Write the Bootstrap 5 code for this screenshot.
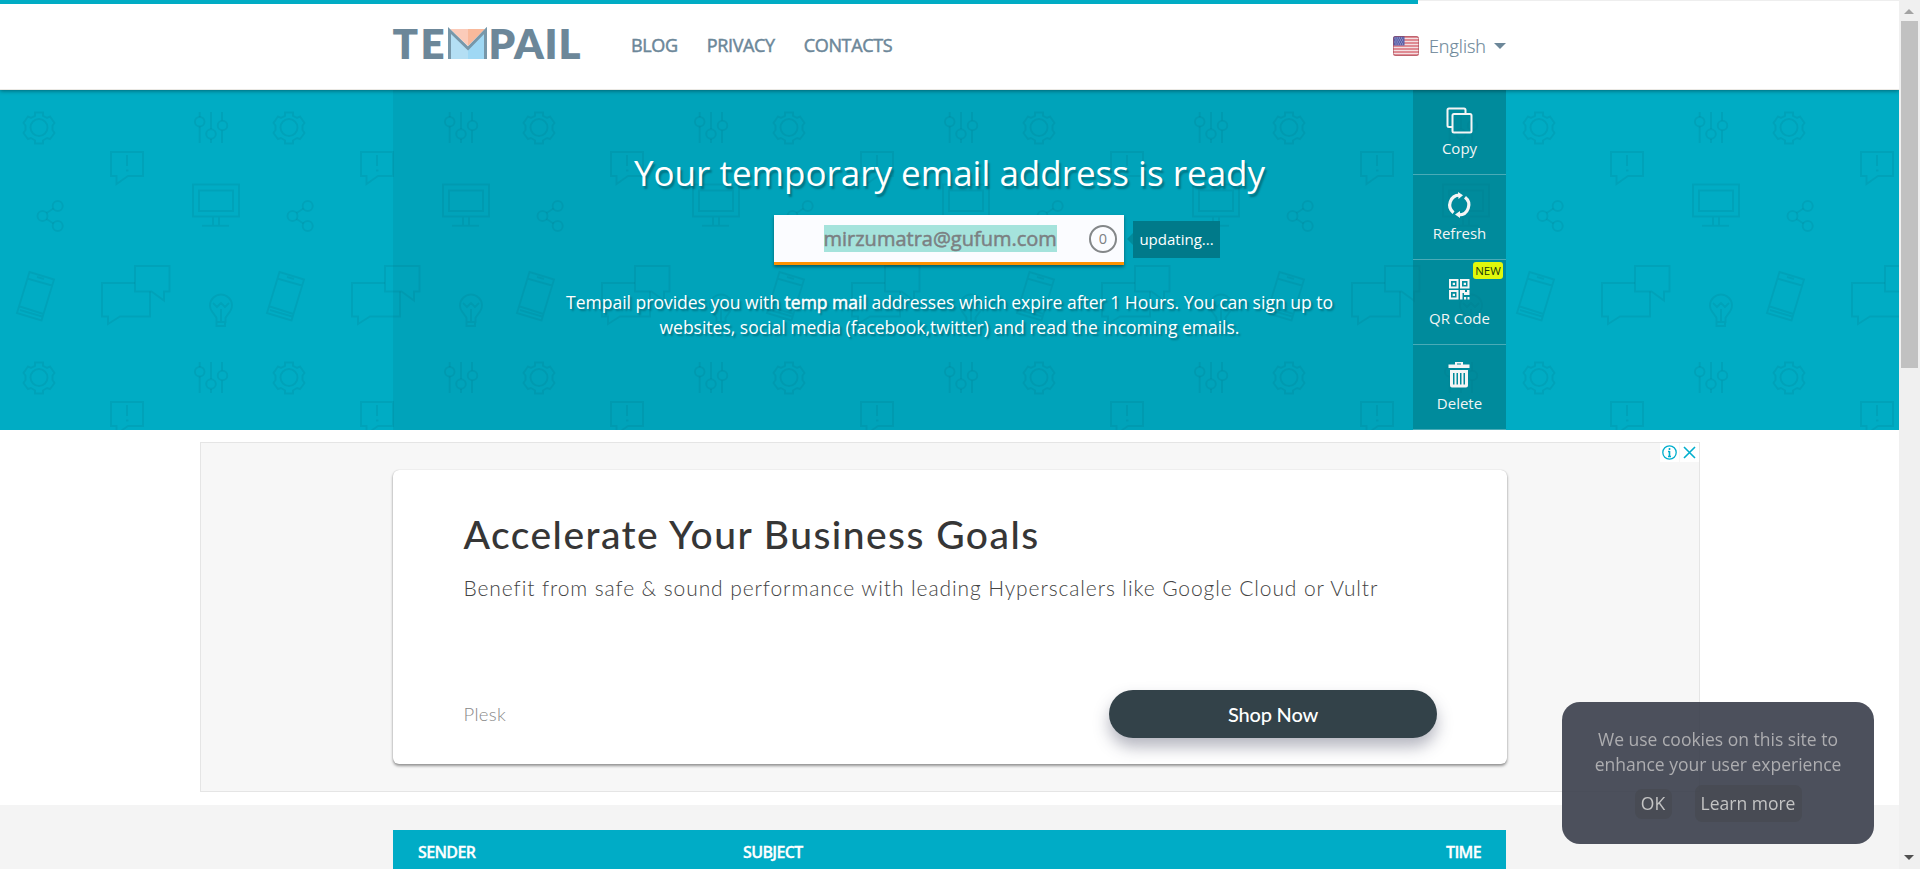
<!DOCTYPE html>
<html lang="en">
<head>
<meta charset="utf-8">
<meta name="viewport" content="width=device-width, initial-scale=1">
<title>Tempail - Temporary Email</title>
<link href="https://cdn.jsdelivr.net/npm/bootstrap@5.3.0/dist/css/bootstrap.min.css" rel="stylesheet">
<style>
  :root { --teal: #00acc4; --slate: #6c8799; }
  body { font-family: "Open Sans", "Noto Sans", sans-serif; height: 869px; background: #fff; }
  .wrap { width: 1113px; margin-left: 393px; }
  .viewport-area { width: 1899px; height: 869px; }
  .semi { -webkit-text-stroke: .5px currentColor; }

  .load-track { height: 4px; border-top: 1px solid #eee; }
  .load-bar { width: 1418px; height: 4px; margin-top: -1px; background: var(--teal); }
  .site-head { height: 90px; background: #fff; border-bottom: 1px solid #ebe9e4; box-shadow: 0 1px 4px rgba(0,0,0,.4); z-index: 3; }
  .head-row { height: 85px; }
  .logo { width: 188px; height: 56px; margin-top: -5px; overflow: visible; }
  .logo text { font: 800 42px Lato, sans-serif; fill: var(--slate); }
  .main-nav { gap: 29px; margin-left: 50px; margin-top: -3px; }
  .main-nav a, .lang { color: var(--slate); font-size: 18px; letter-spacing: -.35px; line-height: 26px; text-decoration: none; }
  .lang { margin-top: -2px; }
  .lang .lbl { font-weight: 300; letter-spacing: 0; -webkit-text-stroke: .2px currentColor; margin-left: 2px; }
  .lang .tri { width: 0; height: 0; border: 6px solid transparent; border-top-color: var(--slate); border-bottom: 0; margin-left: 8px; }

  .hero { height: 340px; background: var(--teal); }
  .hero-pattern { inset: 0; width: 100%; height: 100%; }
  .hero-shade { background: rgba(0,60,80,.08); height: 340px; }
  .hero-main { width: 1113px; padding-top: 61px; color: #fff; }
  .hero-main h1 { font-size: 35px; line-height: 44px; margin: 0; text-shadow: 2px 3px 2px rgba(0,0,0,.3); }
  .mailbox { width: 350px; height: 50px; margin: 20px 0 0 381px; background: #fbfcff; border-bottom: 3px solid #ff9200; box-shadow: 0 2px 3px rgba(0,0,0,.4); color: #7b8082; }
  .mailbox .addr { font-size: 20px; line-height: 27px; margin: 0 32px 0 49.5px; background: #a5e3dc; }
  .count { width: 28px; height: 28px; border: 2px solid #848789; border-radius: 50%; font-size: 14.5px; }
  .tip { left: 359px; top: 6px; width: 87px; height: 37px; background: #007a8a; color: #fff; font-size: 15px; }
  .tip::before { content: ""; position: absolute; left: -6px; top: 12px; border: 6px solid transparent; border-right-color: #008b9c; border-left: 0; }
  .about { font-size: 17.5px; line-height: 25px; margin: 25px 0 0; text-shadow: 2px 2px 2px rgba(0,0,0,.3); }

  .side-menu { width: 93px; right: 0; top: 0; background: #008b9c; }
  .side-menu a { height: 85px; border-bottom: 1px solid #4aabb7; color: #f2f5f5; text-decoration: none; font-size: 15px; line-height: 20px; padding-top: 16px; }
  .side-menu a svg { width: 28px; height: 28px; margin-left: -1px; }
  .side-menu .cap { margin-top: 4px; }
  .new-tag { right: 3px; top: 2px; width: 30px; height: 17px; border-radius: 3px; background: #e1f80c; color: #203a08; font-size: 11.5px; line-height: 17px; }
  .through { opacity: .6; pointer-events: none; }

  .ad-frame { width: 1500px; height: 350px; margin: 12px 0 0 200px; background: #f7f7f7; border: 1px solid #e5e5e5; padding: 27px 192px 0; font-family: Lato, sans-serif; }
  .ad-card { height: 294px; border: 0; border-radius: 6px; padding: 42px 70px 0 70.500px; box-shadow: 0 2px 3px rgba(0,0,0,.4), 0 0 1px rgba(0,0,0,.25); }
  .ad-card h2 { font-size: 39px; line-height: 44px; letter-spacing: 1.450px; font-weight: 500; color: #363636; margin: 0; white-space: nowrap; }
  .ad-card p { font-size: 21px; line-height: 28px; letter-spacing: .9px; font-weight: 300; color: #444; margin: 18px 0 0; white-space: nowrap; }
  .ad-foot { margin-top: 88px; }
  .ad-brand { font-size: 18.5px; font-weight: 300; letter-spacing: .3px; color: #888; padding-top: 1px; }
  .shop-btn, .shop-btn:hover { width: 328px; height: 48px; border-radius: 24px; background: #334249; color: #fff; font-size: 20px; font-weight: 500; letter-spacing: -.2px; box-shadow: 0 9px 16px rgba(60,64,90,.38); }
  .ad-tools { right: 0; top: 0; gap: 1px; }
  .ad-tools svg { width: 19px; height: 19px; background: #fff; }

  .inbox { height: 64px; margin-top: 13px; background: #f4f4f4; padding-top: 25px; }
  .inbox-head { height: 39px; background: #00acc6; color: #fff; font-size: 16px; font-weight: 600; letter-spacing: -.65px; line-height: 20px; padding: 12px 25px 0; -webkit-text-stroke: .3px currentColor; }
  .c-sender { width: 325px; }

  .cookie-box { left: 1562px; top: 702px; width: 312px; height: 142px; border-radius: 18px; background: rgba(61,65,78,.92); color: #adadb0; font-size: 17.5px; line-height: 25px; padding: 25px 20px 0; z-index: 5; }
  .cookie-box a { color: #c4c4c4; background: rgba(60,60,60,.25); border-radius: 7px; text-decoration: none; }
  .ck-ok { width: 37px; height: 30px; }
  .ck-more { width: 107px; height: 37px; }
  .cookie-actions { gap: 23px; margin-top: 8px; }

  .vscroll { width: 21px; height: 869px; background: #f0f0f0; padding: 9px 1px 9px 0; }
  .vscroll .thumb { width: 17px; height: 347px; background: #c1c1c1; margin-top: 7px; }
</style>
</head>
<body class="d-flex overflow-hidden">
<div class="viewport-area overflow-hidden flex-shrink-0">

  <header class="site-head position-relative">
    <div class="load-track"><div class="load-bar"></div></div>
    <div class="wrap head-row d-flex align-items-center">
      <svg class="logo" viewBox="0 -12 188 56" role="img" aria-label="Tempail">
        <text x="-.5" y="31" textLength="52">TE</text>
        <path d="M57 2 75 18V31H57z" fill="#b4dff4"/><path d="M92 2 75 18V31h17z" fill="#9fd8f4"/>
        <path d="M57 1H75V18z" fill="#fbcbb9"/><path d="M75 1H92L75 18z" fill="#f9b99b"/>
        <path d="M56.500 31V2.500L75 20.500 92.500 2.500V31" fill="none" stroke="#7797a9" stroke-width="3"/>
        <text x="95.500" y="31" textLength="92">PAIL</text>
      </svg>
      <nav class="main-nav nav d-flex semi">
        <a href="#">BLOG</a><a href="#">PRIVACY</a><a href="#">CONTACTS</a>
      </nav>
      <a class="lang d-flex align-items-center ms-auto" href="#">
        <svg width="26" height="20" viewBox="0 0 26 20" class="me-2 flex-shrink-0">
          <clipPath id="fl"><rect width="26" height="20" rx="2.500"/></clipPath>
          <g clip-path="url(#fl)">
            <path d="M0 0h26v20H0z" fill="#f3dfe2"/>
            <path d="M0 1h26M0 4h26M0 7h26M0 10h26M0 13h26M0 16h26M0 19h26" stroke="#d9707a" stroke-width="1.700"/>
            <path d="M0 0h11.500v9.500H0z" fill="#5a5fa8"/>
            <path d="M1.500 2h9M2.500 4h8M1.500 6h9M2.500 8h8" stroke="#b9bde0" stroke-width="1" stroke-dasharray="1 1.200"/>
            <rect x=".5" y=".5" width="25" height="19" rx="2" fill="none" stroke="#a24552" stroke-opacity=".55"/>
          </g>
        </svg>
        <span class="lbl">English</span><span class="tri"></span>
      </a>
    </div>
  </header>

  <section class="hero position-relative">
    <svg class="hero-pattern position-absolute" aria-hidden="true">
      <defs>
        <pattern id="tile" width="250" height="250" patternUnits="userSpaceOnUse">
          <g fill="none" stroke="#005a6e" stroke-opacity=".12" stroke-width="2">
            <circle cx="39" cy="37.500" r="8.500"/>
            <path d="M35 22.500h8v3.500l4 2 3-1.500 4.500 6.500-2 2.500v4.500l2 3-4.500 6-3-1-4 2.500v3h-8v-3l-4-2.500-3 1-4.500-6 2-3v-4.500l-2-2.500 4.500-6.500 3 1.500 4-2z"/>
            <path d="M199.700 22v5M199.700 36.500V53M211 22v17M211 49v4M222 22v8.500M222 40.500V53"/>
            <circle cx="199.700" cy="31.700" r="4.800"/><circle cx="211" cy="44" r="4.800"/><circle cx="222.500" cy="35.500" r="4.800"/>
            <path d="M111 62h32v24H128l-11.500 8V86H111zM127 65v11M126 80.500h2.500"/>
            <path d="M193 94.500h46v32h-46zM199 100.500h34v20.500h-34zM213 127v8M219 127v8M202 135.700h27"/>
            <circle cx="42.500" cy="126" r="5"/><circle cx="57.700" cy="116" r="5"/><circle cx="57.700" cy="136" r="5"/>
            <path d="m46.500 123 7-4.500M46.500 129l7 4.500"/>
            <path d="m29.500 182 24.500 7.500L41.500 230.500 17 223zM27 188.500l25 7M20 216.500l23.500 7.500M37 187l7 2M20 220l22 6.500"/>
            <path d="M150 201.500v25h-30l-12 7.500v-7.500h-6V193h33"/>
            <path d="M135 176h34.500v25.500H164v9l-12.500-9H135z"/>
            <path d="M216.500 232v-4c-2-4-6.500-7-6.500-12.500a11 11 0 0 1 22 0c0 5.500-4.500 8.500-6.500 12.500v4zM216.500 232v4h8.500v-4M221 219v12M213 213l4 4 4-4 4 4 4-4"/>
          </g>
        </pattern>
      </defs>
      <rect width="1899" height="340" fill="url(#tile)"/>
    </svg>

    <div class="wrap hero-shade position-relative">
      <div class="hero-main text-center">
        <h1 class="fw-normal">Your temporary email address is ready</h1>
        <div class="mailbox d-flex align-items-center position-relative">
          <span class="addr semi">mirzumatra@gufum.com</span>
          <span class="count d-flex align-items-center justify-content-center">0</span>
          <div class="tip position-absolute d-flex align-items-center justify-content-center">updating...</div>
        </div>
        <p class="about">Tempail provides you with <span class="semi">temp mail</span> addresses which expire after 1 Hours. You can sign up to<br>websites, social media (facebook,twitter) and read the incoming emails.</p>
      </div>

      <nav class="side-menu position-absolute">
        <svg class="position-absolute top-0 start-0 w-100 h-100 through" viewBox="1413 0 93 340" aria-hidden="true"><rect x="1413" width="93" height="340" fill="url(#tile)"/></svg>
        <a class="d-flex flex-column align-items-center position-relative" href="#">
          <svg viewBox="0 0 28 28" fill="none" stroke="#f5f5f5" stroke-width="2"><path d="M7.500 21H4a1.500 1.500 0 0 1-1.500-1.500V4A1.500 1.500 0 0 1 4 2.500h15A1.500 1.500 0 0 1 20.500 4v3.500"/><rect x="7.500" y="8" width="19" height="18.500" rx="1.500"/></svg>
          <span class="cap">Copy</span>
        </a>
        <a class="d-flex flex-column align-items-center position-relative" href="#">
          <svg viewBox="0 0 28 28"><g fill="none" stroke="#f5f5f5" stroke-width="3.200"><path d="M8.500 21.700A9.800 9.800 0 0 1 14.500 4.200"/><path d="M20 6.300A9.800 9.800 0 0 1 14 23.800"/></g><path d="m13 1 5 3.300-4.500 3.700zM15 20v7l-5-3.500z" fill="#f5f5f5"/></svg>
          <span class="cap">Refresh</span>
        </a>
        <a class="d-flex flex-column align-items-center position-relative" href="#">
          <svg viewBox="0 0 28 28"><g fill="none" stroke="#f5f5f5" stroke-width="2"><path d="M5 4h7.500v7.500H5zM16 4h7.500v7.500H16zM5 15h7.500v7.500H5z"/></g><path d="M7.700 6.700h2.300v2.300H7.700zM18.700 6.700h2.300v2.300h-2.300zM7.700 17.700h2.300v2.300H7.700zM15 14h5v2h2v-2h2.500v5H19v-2h-1.500v6.500H15zM19 21h2.200v2.500H19zM22.500 21h2v2.500h-2z" fill="#f5f5f5"/></svg>
          <span class="cap">QR Code</span>
          <span class="new-tag position-absolute text-center">NEW</span>
        </a>
        <a class="d-flex flex-column align-items-center position-relative" href="#">
          <svg viewBox="0 0 28 28"><path fill="#f5f5f5" fill-rule="evenodd" d="M10 1h8v2.500h6.500V7h-21V3.500H10zM12 2.500v1h4v-1zM5 9h18v15.500a2 2 0 0 1-2 2H7a2 2 0 0 1-2-2zM8 12v11.500h1.500V12zM11.500 12v11.500H13V12zM15 12v11.500h1.500V12zM18.500 12v11.500H20V12z"/></svg>
          <span class="cap">Delete</span>
        </a>
      </nav>
    </div>
  </section>

  <section class="ad-frame position-relative">
    <div class="ad-tools position-absolute d-flex">
      <svg viewBox="0 0 19 19" fill="none" stroke="#00aecd"><circle cx="9.500" cy="9.500" r="6.700" stroke-width="1.300"/><path d="M9.500 5v2M9.500 8v5.500M8 8.500h1.500M8 13.500h3" stroke-width="1.600"/></svg>
      <svg viewBox="0 0 19 19" fill="none" stroke="#00aecd" stroke-width="1.600"><path d="m4 4 11 11M15 4 4 15"/></svg>
    </div>
    <div class="ad-card card">
      <h2>Accelerate Your Business Goals</h2>
      <p>Benefit from safe &amp; sound performance with leading Hyperscalers like Google Cloud or Vultr</p>
      <div class="ad-foot d-flex align-items-center justify-content-between">
        <span class="ad-brand">Plesk</span>
        <button class="btn shop-btn border-0 p-0">Shop Now</button>
      </div>
    </div>
  </section>

  <section class="inbox">
    <div class="wrap inbox-head d-flex">
      <span class="c-sender">SENDER</span><span>SUBJECT</span><span class="ms-auto">TIME</span>
    </div>
  </section>
</div>

<aside class="vscroll flex-shrink-0 d-flex flex-column align-items-center">
  <svg width="10" height="5" viewBox="0 0 10 5" class="flex-shrink-0"><path d="M0 5 5 0l5 5z" fill="#a3a3a3"/></svg>
  <div class="thumb flex-shrink-0"></div>
  <svg width="10" height="5" viewBox="0 0 10 5" class="flex-shrink-0 mt-auto"><path d="M0 0 5 5l5-5z" fill="#505050"/></svg>
</aside>

<div class="cookie-box position-fixed text-center">
  We use cookies on this site to enhance your user experience
  <div class="cookie-actions d-flex align-items-center justify-content-center">
    <a href="#" class="ck-ok d-flex align-items-center justify-content-center">OK</a>
    <a href="#" class="ck-more d-flex align-items-center justify-content-center">Learn more</a>
  </div>
</div>
<script src="https://cdn.jsdelivr.net/npm/bootstrap@5.3.0/dist/js/bootstrap.bundle.min.js"></script>
</body>
</html>
